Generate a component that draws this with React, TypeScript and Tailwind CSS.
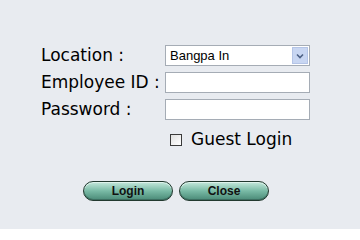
import { FC } from "react";

const labelFont = "font-['DejaVu_Sans','Liberation_Sans',sans-serif]";

const Field: FC<{ label: string; children: React.ReactNode }> = ({ label, children }) => {
    return (
        <div className="flex items-center h-[21px]">
            <div className={`w-[124px] text-[17px] text-black ${labelFont} whitespace-nowrap`}>
                {label}
            </div>
            {children}
        </div>
    )
}

const PillButton: FC<{ text: string }> = ({ text }) => {
    return (
        <button className="w-[90px] h-[20px] rounded-full border border-[#22392f] bg-gradient-to-b from-[#c4e8dc] via-[#78baa5] to-[#4a8a77] shadow-[inset_0_1px_0_#dff3ec,inset_0_-1px_0_#3d6f61] font-['Liberation_Sans',Arial,sans-serif] font-bold text-[12px] text-[#111] leading-none">
            {text}
        </button>
    )
}

const App: FC = () => {
    return (
        <div className="w-[360px] h-[229px] bg-[#e8ebf0] overflow-hidden">
            <div className="flex flex-col pl-[41px] pt-[45px]">
                <div className="flex flex-col gap-[6px]">
                    <Field label="Location :">
                        <div className="w-[145px] h-[21px] bg-white border border-[#a5acb5] flex items-center justify-between pl-[4px] pr-[1px]">
                            <span className="font-['Liberation_Sans',Arial,sans-serif] text-[13px] text-black">Bangpa In</span>
                            <span className="w-[16px] h-[17px] bg-[#c8d6f2] border border-[#b4c4e6] flex items-center justify-center">
                                <svg width="8" height="6" viewBox="0 0 8 6">
                                    <path d="M1 1.5 L4 4.5 L7 1.5" stroke="#4d6185" strokeWidth="1.6" fill="none" />
                                </svg>
                            </span>
                        </div>
                    </Field>
                    <Field label="Employee ID :">
                        <input className="w-[145px] h-[21px] bg-white border border-[#a5acb5] outline-none" />
                    </Field>
                    <Field label="Password :">
                        <input type="password" className="w-[145px] h-[21px] bg-white border border-[#a5acb5] outline-none" />
                    </Field>
                </div>
                <div className="flex items-center mt-[9px] ml-[129px] h-[22px]">
                    <span className="w-[12px] h-[12px] border border-[#3a3a3a] bg-gradient-to-br from-[#e0e0e0] to-white"></span>
                    <span className={`ml-[9px] text-[17px] text-black ${labelFont}`}>Guest Login</span>
                </div>
                <div className="flex gap-[6px] ml-[42px] mt-[30px]">
                    <PillButton text="Login" />
                    <PillButton text="Close" />
                </div>
            </div>
        </div>
    )
}

export default App;
